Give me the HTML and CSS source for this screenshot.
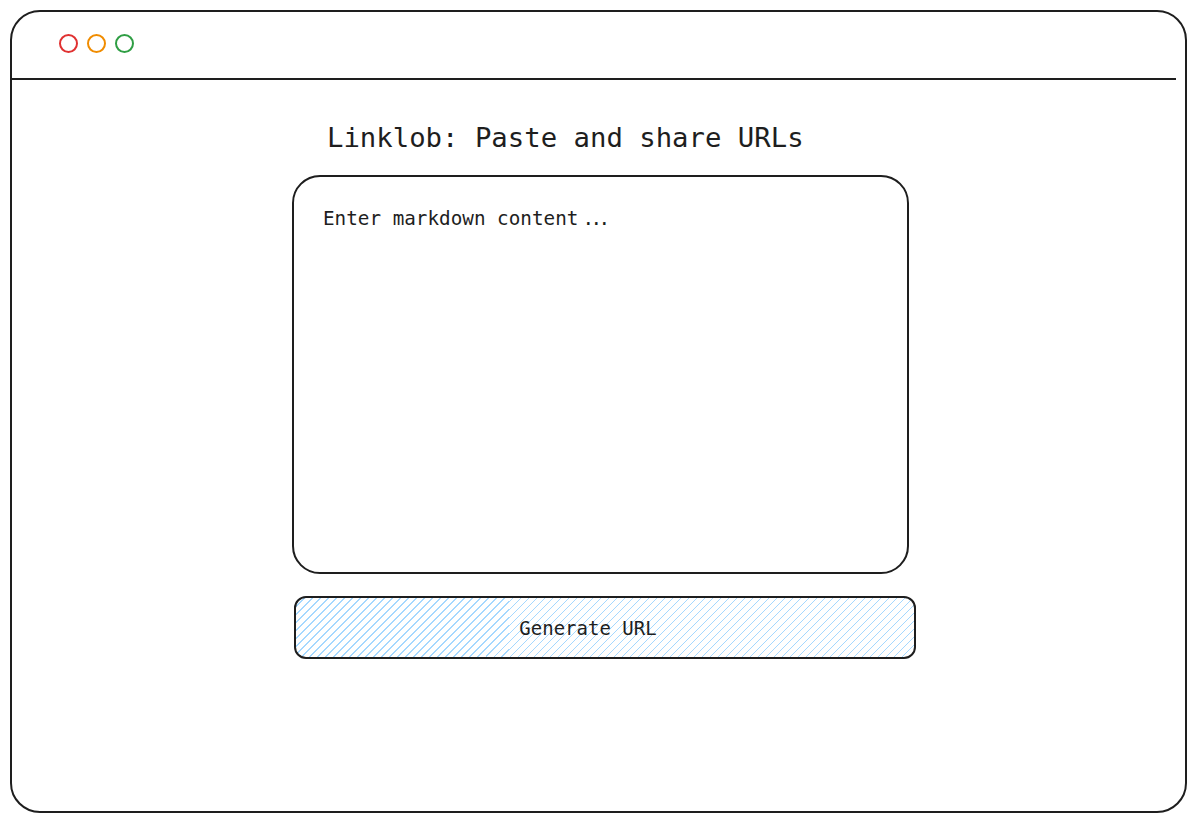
FILE: index.html
```html
<!DOCTYPE html>
<html lang="en">
<head>
<meta charset="utf-8">
<title>Linklob</title>
<link rel="stylesheet" href="styles.css">
</head>
<body>
<div class="frame">
  <div class="header">
    <span class="dot dot-red"></span>
    <span class="dot dot-orange"></span>
    <span class="dot dot-green"></span>
  </div>
  <div class="divider"></div>
  <main class="main">
    <h1 class="title">Linklob: Paste and share URLs</h1>
    <div class="editor">
      <span class="placeholder">Enter markdown content<span class="dots">...</span></span>
    </div>
    <div class="button"><span>Generate URL</span></div>
  </main>
</div>
</body>
</html>
```
FILE: styles.css
```css
html, body {
  margin: 0;
  padding: 0;
  background: #ffffff;
}
body {
  font-family: "DejaVu Sans Mono", "Liberation Mono", monospace;
  color: #1e1e1e;
}
.frame {
  box-sizing: border-box;
  margin: 10px;
  width: 1177px;
  height: 803px;
  border: 2px solid #1e1e1e;
  border-radius: 30px;
  overflow: hidden;
}
.header {
  box-sizing: border-box;
  height: 66px;
  padding: 22px 0 0 47px;
  display: flex;
  gap: 9px;
  align-items: flex-start;
}
.dot {
  box-sizing: border-box;
  width: 19px;
  height: 19px;
  border-radius: 50%;
  border: 2px solid;
}
.dot-red { border-color: #e03131; }
.dot-orange { border-color: #f08c00; }
.dot-green { border-color: #2f9e44; }
.divider {
  height: 2px;
  background: #1e1e1e;
  margin-right: 9px;
}
.main {
  display: flex;
  flex-direction: column;
  align-items: flex-start;
  padding: 42px 0 0 280px;
}
.title {
  margin: 0 0 21px 35px;
  font-size: 27.3px;
  line-height: 32px;
  font-weight: normal;
}
.editor {
  box-sizing: border-box;
  width: 617px;
  height: 399px;
  border: 2px solid #1e1e1e;
  border-radius: 28px;
  padding: 30px 0 0 29px;
}
.placeholder {
  font-size: 19.3px;
  line-height: 24px;
}
.dots {
  margin-left: 4px;
  letter-spacing: -3.6px;
}
.button {
  box-sizing: border-box;
  margin: 22px 0 0 2px;
  width: 622px;
  height: 63px;
  border: 2px solid #1e1e1e;
  border-radius: 12px;
  background: repeating-linear-gradient(135deg, #a5d8ff 0 1.1px, transparent 1.1px 5.65685px);
  display: flex;
  align-items: center;
  justify-content: center;
  padding-right: 34px;
  font-size: 19px;
}
```
